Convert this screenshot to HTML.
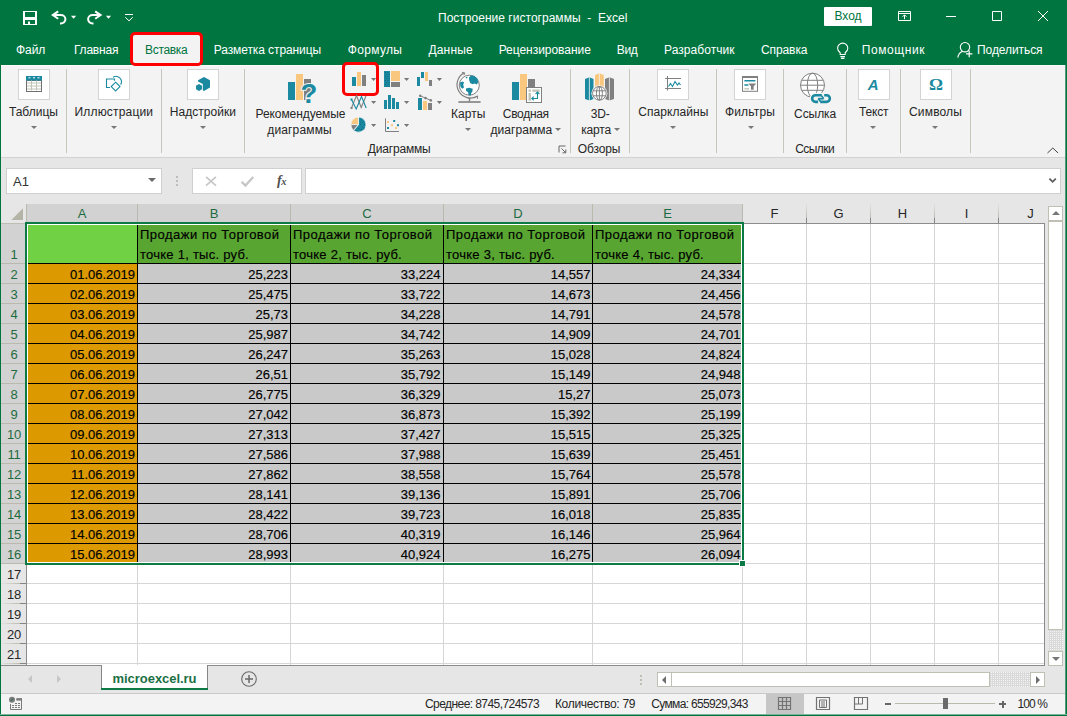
<!DOCTYPE html>
<html lang="ru"><head><meta charset="utf-8"><title>Построение гистограммы - Excel</title>
<style>
html,body{margin:0;padding:0}
body{width:1067px;height:716px;overflow:hidden;background:#e6e6e6;font-family:"Liberation Sans",sans-serif;font-size:12px;color:#262626;position:relative}
.a{position:absolute}
.t{position:absolute;white-space:nowrap;line-height:16px;height:16px}
.w{color:#fff}
.c{text-align:center}
.sep{position:absolute;top:69px;width:1px;height:84px;background:#c6c6bc}
.ib{position:absolute;top:69px;width:30px;height:29px;background:#fff;border:1px solid #d4d4d4}
.dd{position:absolute;width:0;height:0;border-left:3px solid transparent;border-right:3px solid transparent;border-top:3px solid #777}
.cell{position:absolute;white-space:nowrap;font-size:13px;line-height:16px;height:16px;color:#000;text-align:right;-webkit-text-stroke:0.15px #000}
.hd{position:absolute;top:205px;height:18px;line-height:18px;text-align:center;font-size:13px;color:#262626}
.rn{position:absolute;left:2px;width:24px;letter-spacing:-0.3px;text-align:center;font-size:13px;line-height:16px;height:16px;color:#262626}
.sel{color:#1e6b41}
</style></head>
<body>
<div class="a" style="left:0;top:0;width:1067px;height:65px;background:#007540"></div>
<svg class="a" style="left:0;top:0" width="200" height="32" viewBox="0 0 200 32" fill="none" stroke="#fff">
<path d="M24 11.500v13M36 11.500v13" stroke-width="2"/><path d="M23 11.500h14M23 24.500h14" stroke-width="1"/><path d="M25 18.500h10" stroke-width="3"/><path d="M29 21.500v3" stroke-width="2"/>
<path d="M58.200 11.400l-5.400 3.700 5.400 3.700" stroke-width="2"/><path d="M53.500 15.100h7.300a4.600 4.200 0 0 1 0 8.400h-.8" stroke-width="2"/>
<path d="M71 15.800h5.200l-2.600 3z" fill="#fff" stroke="none"/>
<path d="M95.200 11.400l5.400 3.700-5.400 3.700" stroke-width="2"/><path d="M100 15.100h-7.300a4.600 4.200 0 0 0 0 8.400h.8" stroke-width="2"/>
<path d="M105.900 15.800h5.200l-2.600 3z" fill="#fff" stroke="none"/>
<path d="M125 14.500h8" stroke-width="1"/><path d="M125.300 17.300l3.700 3.500 3.700-3.500" stroke-width="1"/>
</svg>
<div class="t w" style="left:438.0px;top:10px;letter-spacing:0.02px;white-space:pre;">Построение гистограммы  -  Excel</div>
<div class="a c" style="left:824px;top:7px;width:48px;height:19px;line-height:19px;background:#fff;color:#007540;border-radius:1px">Вход</div>
<svg class="a" style="left:890px;top:6px" width="170" height="20" viewBox="0 0 170 20" fill="none" stroke="#fff" stroke-width="1">
<path d="M8.500 5.500h12v9h-12z"/><path d="M8.500 7.500h12"/><path d="M14.500 13.200v-4.200M12.500 10.800l2-2 2 2"/>
<path d="M56 10.5h10"/>
<path d="M102.5 5.5h9v9h-9z"/>
<path d="M148 5l10 10M158 5l-10 10"/>
</svg>
<div class="t w" style="left:16.0px;top:42px;letter-spacing:-0.08px;">Файл</div>
<div class="t w" style="left:74.0px;top:42px;letter-spacing:-0.21px;">Главная</div>
<div class="t w" style="left:213.7px;top:42px;letter-spacing:-0.09px;">Разметка страницы</div>
<div class="t w" style="left:347.8px;top:42px;letter-spacing:0.31px;">Формулы</div>
<div class="t w" style="left:428.5px;top:42px;letter-spacing:0.16px;">Данные</div>
<div class="t w" style="left:498.7px;top:42px;letter-spacing:-0.04px;">Рецензирование</div>
<div class="t w" style="left:616.8px;top:42px;letter-spacing:-0.34px;">Вид</div>
<div class="t w" style="left:664.0px;top:42px;letter-spacing:0.05px;">Разработчик</div>
<div class="t w" style="left:760.9px;top:42px;letter-spacing:-0.07px;">Справка</div>
<div class="t w" style="left:861.7px;top:42px;letter-spacing:0.60px;">Помощник</div>
<div class="t w" style="left:977.0px;top:42px;letter-spacing:-0.08px;">Поделиться</div>
<div class="a" style="left:130px;top:32px;width:67px;height:28px;border:3px solid #f00;border-radius:5px;background:#f3f3f3;z-index:2"></div>
<div class="t" style="left:145.1px;top:42px;letter-spacing:-0.34px;color:#007540;z-index:3;">Вставка</div>
<svg class="a" style="left:834px;top:40px" width="18" height="20" viewBox="0 0 18 20" fill="none" stroke="#fff" stroke-width="1.1">
<path d="M6.2 12.8c-1.6-1.2-2.6-2.7-2.6-4.6a5.1 5.1 0 0 1 10.2 0c0 1.9-1 3.4-2.6 4.6v1.7h-5z"/><path d="M6.4 16.6h4.6M7 18.4h3.4"/></svg>
<svg class="a" style="left:956px;top:40px" width="18" height="20" viewBox="0 0 18 20" fill="none" stroke="#fff" stroke-width="1.1">
<circle cx="9" cy="7.200" r="4.700"/><path d="M1.800 17.600c.500-3.400 2.300-5.400 4.800-6.400"/><path d="M13.200 10.400v6.800M10 13.800h6.400" stroke-width="1.200"/></svg>
<div class="a" style="left:0;top:65px;width:1067px;height:92px;background:#f3f3f3"></div>
<div class="a" style="left:0;top:65px;width:1067px;height:1px;background:#fbfbfb"></div>
<div class="a" style="left:0;top:157px;width:1067px;height:1px;background:#d2d2d2"></div>
<div class="sep" style="left:66px"></div>
<div class="sep" style="left:161px"></div>
<div class="sep" style="left:244px"></div>
<div class="sep" style="left:570px"></div>
<div class="sep" style="left:629px"></div>
<div class="sep" style="left:716px"></div>
<div class="sep" style="left:783px"></div>
<div class="sep" style="left:846px"></div>
<div class="sep" style="left:900px"></div>
<div class="sep" style="left:970px"></div>
<div class="ib" style="left:18px"></div>
<div class="ib" style="left:98px"></div>
<div class="ib" style="left:187px"></div>
<div class="ib" style="left:657px"></div>
<div class="ib" style="left:734px"></div>
<div class="ib" style="left:858px"></div>
<div class="ib" style="left:920px"></div>
<div class="t" style="left:8.9px;top:104px;letter-spacing:-0.00px;">Таблицы</div>
<div class="dd" style="left:30.9px;top:126px"></div>
<div class="t" style="left:74.5px;top:104px;letter-spacing:0.18px;">Иллюстрации</div>
<div class="dd" style="left:111.3px;top:126px"></div>
<div class="t" style="left:169.8px;top:104px;letter-spacing:0.04px;">Надстройки</div>
<div class="dd" style="left:200.4px;top:126px"></div>
<div class="t" style="left:638.2px;top:104px;letter-spacing:0.07px;">Спарклайны</div>
<div class="dd" style="left:670.4px;top:126px"></div>
<div class="t" style="left:724.9px;top:104px;letter-spacing:0.18px;">Фильтры</div>
<div class="dd" style="left:747.5px;top:126px"></div>
<div class="t" style="left:859.1px;top:104px;letter-spacing:-0.20px;">Текст</div>
<div class="dd" style="left:870.2px;top:126px"></div>
<div class="t" style="left:909.0px;top:104px;letter-spacing:0.17px;">Символы</div>
<div class="dd" style="left:932.3px;top:126px"></div>
<div class="t" style="left:255.5px;top:106px;letter-spacing:-0.07px;">Рекомендуемые</div>
<div class="t" style="left:267.3px;top:122px;letter-spacing:0.14px;">диаграммы</div>
<div class="t" style="left:451.1px;top:106px;letter-spacing:0.04px;">Карты</div>
<div class="dd" style="left:464.5px;top:128px"></div>
<div class="t" style="left:502.8px;top:106px;letter-spacing:-0.30px;">Сводная</div>
<div class="t" style="left:490.5px;top:122px;letter-spacing:0.06px;">диаграмма</div>
<div class="dd" style="left:554.7px;top:128px"></div>
<div class="t" style="left:590.7px;top:106px;letter-spacing:-0.11px;">3D-</div>
<div class="t" style="left:581.3px;top:122px;letter-spacing:-0.21px;">карта</div>
<div class="dd" style="left:613.7px;top:128px"></div>
<div class="t" style="left:794.1px;top:106px;letter-spacing:-0.08px;">Ссылка</div>
<div class="t" style="left:367.7px;top:141px;letter-spacing:-0.17px;">Диаграммы</div>
<div class="t" style="left:577.8px;top:141px;letter-spacing:-0.13px;">Обзоры</div>
<div class="t" style="left:795.2px;top:141px;letter-spacing:-0.54px;">Ссылки</div>
<svg class="a" style="left:1045px;top:145px" width="16" height="10" viewBox="0 0 16 10" fill="none" stroke="#444" stroke-width="1"><path d="M2.5 8l5.3-5 5.3 5"/></svg>
<svg class="a" style="left:558px;top:145px" width="9" height="9" viewBox="0 0 9 9" fill="none" stroke="#666" stroke-width="1"><path d="M1 7.5v-6.5h6.5"/><path d="M3.5 3.5l4 4M7.8 4.5v3.3h-3.3"/></svg>
<div class="a" style="left:342px;top:62px;width:31px;height:28px;border:3px solid #f00;border-radius:5px"></div>
<svg class="a" style="left:0;top:0" width="1067" height="160" viewBox="0 0 1067 160" shape-rendering="auto">
<!-- tables icon -->
<g>
<rect x="26.5" y="80.5" width="15" height="11" fill="#fff" stroke="#707070"/>
<path d="M31.500 80v11M36.500 80v11M27 83.500h14M27 86.500h14M27 89.500h14" stroke="#c3c3b7" fill="none" transform="translate(0,-0.5)"/>
<rect x="26" y="76" width="16" height="4.500" fill="#1b8aa0"/>
<path d="M28.500 77.800h2M33 77.800h2M37.500 77.800h2" stroke="#fff" stroke-width="1" fill="none"/>
</g>
<!-- illustrations icon -->
<g fill="none" stroke="#1b8aa0" stroke-width="1.1">
<path d="M110 87.500h-3.500v-8.500h8v1.800"/>
<path d="M113 77.300a5.400 5.400 0 0 1 7.600 7.300"/>
<path d="M115.600 82.200l4.400 4.400-4.400 4.400-4.400-4.400z"/>
</g>
<!-- addins icon -->
<g fill="#1b8aa0">
<path d="M204 77l6 3.300v7.200l-6 3.500-1.200-.7v-6.200l-4.800-2.700v-1.100z"/>
<path d="M199 84.100l3 1.700v3.400l-3 1.700-3-1.700v-3.400z"/>
</g>
<!-- recommended charts -->
<rect x="288" y="82" width="7" height="18" fill="#1b8aa0"/>
<rect x="296" y="74" width="7" height="26" fill="#f9c77d"/>
<rect x="304" y="79" width="7" height="21" fill="#808080"/>
<text x="300.400" y="102.900" font-family="Liberation Sans, sans-serif" font-weight="bold" font-size="27.500" fill="#1b8aa0" stroke="#f3f3f3" stroke-width="2" paint-order="stroke">?</text>
<!-- column chart -->
<rect x="352" y="77" width="4" height="9" fill="#1b8aa0"/><rect x="357" y="72" width="4" height="14" fill="#f9c77d"/><rect x="362" y="75" width="4" height="11" fill="#808080"/>
<!-- treemap -->
<rect x="384" y="71" width="6" height="16" fill="#1b8aa0"/><rect x="391" y="71" width="9" height="10" fill="#f9c77d"/><rect x="391" y="82" width="9" height="5" fill="#808080"/>
<rect x="385.0" y="72" width="0.9" height="0.9" fill="#0a5f78"/><rect x="387.5" y="72" width="0.9" height="0.9" fill="#0a5f78"/><rect x="386.2" y="74" width="0.9" height="0.9" fill="#0a5f78"/><rect x="388.7" y="74" width="0.9" height="0.9" fill="#0a5f78"/><rect x="385.0" y="76" width="0.9" height="0.9" fill="#0a5f78"/><rect x="387.5" y="76" width="0.9" height="0.9" fill="#0a5f78"/><rect x="386.2" y="78" width="0.9" height="0.9" fill="#0a5f78"/><rect x="388.7" y="78" width="0.9" height="0.9" fill="#0a5f78"/><rect x="385.0" y="80" width="0.9" height="0.9" fill="#0a5f78"/><rect x="387.5" y="80" width="0.9" height="0.9" fill="#0a5f78"/><rect x="386.2" y="82" width="0.9" height="0.9" fill="#0a5f78"/><rect x="388.7" y="82" width="0.9" height="0.9" fill="#0a5f78"/><rect x="385.0" y="84" width="0.9" height="0.9" fill="#0a5f78"/><rect x="387.5" y="84" width="0.9" height="0.9" fill="#0a5f78"/><rect x="386.2" y="86" width="0.9" height="0.9" fill="#0a5f78"/><rect x="388.7" y="86" width="0.9" height="0.9" fill="#0a5f78"/>
<!-- waterfall -->
<rect x="417" y="77" width="3" height="9" fill="#1b8aa0"/><rect x="421" y="72" width="3" height="6" fill="#1b8aa0"/><rect x="425" y="72" width="3" height="9" fill="#f9c77d"/><rect x="429" y="80" width="3" height="6" fill="#808080"/>
<!-- line chart -->
<g fill="none" stroke-width="1.1">
<path d="M351.500 108l5-12.500 4.700 12 4.800-11.500" stroke="#808080"/>
<path d="M351.500 99.500l4.700 9.500 5.300-12.500 4.700 11.500" stroke="#1b8aa0"/>
</g>
<rect x="350.500" y="98.500" width="2" height="2" fill="#1b8aa0"/><rect x="350.500" y="107" width="2" height="2" fill="#808080"/>
<!-- histogram -->
<rect x="384" y="100" width="3" height="9" fill="#1b8aa0"/><rect x="388" y="95" width="3" height="14" fill="#1b8aa0"/><rect x="392" y="98" width="3" height="11" fill="#1b8aa0"/><rect x="396" y="102" width="3" height="7" fill="#1b8aa0"/>
<!-- combo -->
<rect x="418" y="98" width="4" height="12" fill="#1b8aa0"/><rect x="423" y="101" width="4" height="9" fill="#f9c77d"/><rect x="428" y="103" width="4" height="7" fill="#808080"/>
<path d="M420.200 95.800l5.300 2.300 5.300 2.300" stroke="#808080" stroke-width="1" fill="none"/>
<circle cx="420.200" cy="95.800" r="1.300" fill="#808080"/><circle cx="425.500" cy="98.100" r="1.300" fill="#808080"/><circle cx="430.800" cy="100.400" r="1.300" fill="#808080"/>
<!-- pie -->
<g stroke="#f3f3f3" stroke-width="0.9">
<path d="M358.400 124.600v-7.600a7.600 7.600 0 1 1-4.900 13.400z" fill="#1b8aa0"/>
<path d="M358.400 124.600h-7.600a7.600 7.600 0 0 1 7.600-7.600z" fill="#f9c77d"/>
<path d="M358.400 124.600l-4.900 5.800a7.600 7.600 0 0 1-2.700-5.800z" fill="#808080"/>
</g>
<rect x="360.5" y="119.5" width="0.9" height="0.9" fill="#0a5f78"/><rect x="362.5" y="121.5" width="0.9" height="0.9" fill="#0a5f78"/><rect x="364" y="124" width="0.9" height="0.9" fill="#0a5f78"/><rect x="362" y="126.5" width="0.9" height="0.9" fill="#0a5f78"/><rect x="360" y="124" width="0.9" height="0.9" fill="#0a5f78"/><rect x="361" y="129" width="0.9" height="0.9" fill="#0a5f78"/><rect x="358.5" y="128" width="0.9" height="0.9" fill="#0a5f78"/><rect x="363.5" y="128.5" width="0.9" height="0.9" fill="#0a5f78"/><rect x="356.5" y="130" width="0.9" height="0.9" fill="#0a5f78"/><rect x="360.5" y="122" width="0.9" height="0.9" fill="#0a5f78"/>
<!-- scatter -->
<path d="M385.500 118.300v13.200h13.500" stroke="#808080" stroke-width="1" fill="none"/>
<rect x="387" y="121" width="2" height="2" fill="#f9c77d"/><rect x="393.200" y="120" width="2" height="2" fill="#1b8aa0"/><rect x="391" y="124.200" width="2" height="2" fill="#f9c77d"/><rect x="397" y="124.200" width="2" height="2" fill="#1b8aa0"/><rect x="387" y="127" width="2" height="2" fill="#1b8aa0"/><rect x="395" y="127" width="2" height="2" fill="#f9c77d"/>
<!-- small dropdown arrows -->
<g fill="#777">
<path d="M371 78h5.200l-2.600 3z"/><path d="M404 78h5.200l-2.600 3z"/><path d="M436.800 78h5.200l-2.600 3z"/>
<path d="M371 101h5.200l-2.600 3z"/><path d="M404 101h5.200l-2.600 3z"/><path d="M436.800 101h5.200l-2.600 3z"/>
<path d="M371 124h5.200l-2.600 3z"/><path d="M404 124h5.200l-2.600 3z"/>
</g>
<!-- maps globe -->
<g fill="none" stroke="#808080">
<circle cx="469.300" cy="85.200" r="10" fill="#fff" stroke-width="1"/>
<path d="M463.800 73a12.600 12.600 0 0 0 13.300 23.300" stroke-width="1.200"/>
<path d="M462 72.300l2.800.6-.9 2.300M474.800 97.600l2.800-1.700-.2 2.900" stroke-width="1"/>
<path d="M469.500 97.500v4" stroke-width="1.400"/>
<path d="M458.400 102h22.200" stroke-width="1.600"/>
</g>
<g fill="#1b8aa0">
<path d="M469 77.500l2-2 3.500.5 3 2.800.8 3.200-1.500 2.500-2.300-1-2 .8-2.300-1.300-1-2.700z"/>
<path d="M460 82.500l2.500-1 1.500 1-.8 2.300.8 2.800-1.800 1.200-1.800-2.300z"/>
<path d="M466 88.500l3.200-.8 3.500 1-.3 3-1.200 1.300-.3 2.500-2.300-.3-.5-3-2.100-1.400z"/>
<path d="M465.500 77.500l1.500-.8.700 1-1.400.9z"/>
</g>
<!-- pivot chart -->
<rect x="512" y="82" width="7" height="18" fill="#1b8aa0"/><rect x="520" y="74" width="7" height="26" fill="#f9c77d"/><rect x="528" y="79" width="7" height="12" fill="#808080"/>
<rect x="526.500" y="87.500" width="15" height="15" fill="#fff" stroke="#808080"/>
<rect x="528.500" y="89.500" width="2.500" height="2.300" fill="#c3c3b7"/><rect x="532.300" y="89.500" width="7.400" height="2.300" fill="#c3c3b7"/><rect x="528.500" y="93" width="2.500" height="7.700" fill="#c3c3b7"/>
<path d="M537.500 92.200v6.300h-5.500M535.600 94l1.900-1.900 1.900 1.900M533.700 96.600l-1.900 1.900 1.900 1.900" stroke="#1b8aa0" stroke-width="1.100" fill="none"/>
<!-- 3d map -->
<path d="M585 79l4.500-1.700 4 1.700v20l-4 1.500-4.500-1.500z" fill="#1b8aa0"/><path d="M589.400 77v24" stroke="#f3f3f3" stroke-width="0.800"/>
<path d="M595 75l4.500-1.800 4.300 1.800v20h-8.800z" fill="#f9c77d"/><path d="M599.400 73v22" stroke="#f3f3f3" stroke-width="0.800"/>
<path d="M605 79l4.500-1.700 4.500 1.700v20l-4.500 1.500-4.500-1.500z" fill="#808080"/><path d="M609.400 77v24" stroke="#f3f3f3" stroke-width="0.800"/>
<circle cx="599.400" cy="93.300" r="8" fill="#f3f3f3"/>
<g fill="none" stroke="#808080" stroke-width="1">
<circle cx="599.400" cy="93.300" r="6.800" fill="#fff"/>
<ellipse cx="599.400" cy="93.300" rx="3" ry="6.800"/>
<path d="M599.400 86.500v13.600M593.200 90.800h12.400M593.200 95.800h12.400"/>
</g>
<!-- sparkline -->
<path d="M667.500 76v14.600M665 78.500h16M665 88.500h16" stroke="#808080" stroke-width="1" fill="none"/>
<path d="M668.500 86.500l2-3 2 3 2.500-5 2.500 3.500 1.500-2 1.500 2" stroke="#1b8aa0" stroke-width="1.100" fill="none"/>
<!-- filter -->
<rect x="742.500" y="77" width="15" height="14.300" fill="#fff" stroke="#808080"/><rect x="742" y="76" width="16" height="2" fill="#808080"/>
<path d="M744.400 80.700h11M744.400 85h4" stroke="#1b8aa0" stroke-width="1.600" fill="none"/>
<path d="M744.400 88.800h4.600" stroke="#c3c3b7" stroke-width="1.400"/>
<path d="M748.400 83.500h7.800l-2.600 3v3.300h-2.600v-3.300z" fill="#808080"/>
<!-- link -->
<g fill="none" stroke="#808080" stroke-width="1">
<circle cx="812.500" cy="85.200" r="12" fill="#fff"/>
<ellipse cx="812.500" cy="85.200" rx="5.200" ry="12"/>
<path d="M800.500 85.200h24M801.800 80.300h21.400M801.800 90.300h21.400"/>
</g>
<rect x="809.600" y="92.700" width="22.800" height="11.700" rx="5.800" fill="#f3f3f3"/>
<g fill="none" stroke="#1b8aa0" stroke-width="2.600">
<path d="M821.800 95.200h-6.300a3.350 3.350 0 0 0 0 6.700h2.600"/>
<path d="M824.200 95.200h2.300a3.350 3.350 0 0 1 0 6.700h-6.300"/>
<path d="M818.300 98.700h5.200" stroke-width="1.800"/>
<path d="M821.500 95.600l2.200 3M818.200 98.600l2.400 3.200" stroke-width="1.600"/>
</g>
<!-- text A / omega -->
<text x="867.800" y="89.800" font-family="Liberation Sans, sans-serif" font-style="italic" font-weight="bold" font-size="15" fill="#1b8aa0">A</text>
<text x="929" y="89.800" font-family="Liberation Serif, serif" font-weight="bold" font-size="17.500" fill="#1b8aa0">Ω</text>
</svg>

<div class="a" style="left:6px;top:168px;width:154px;height:24px;background:#fff;border:1px solid #d0d0d0"></div>
<div class="t" style="left:13px;top:174px;font-size:13px;color:#333">A1</div>
<div class="a" style="left:147.600px;top:177.700px;width:0;height:0;border-left:4px solid transparent;border-right:4px solid transparent;border-top:4.500px solid #6a6a6a"></div>
<div class="a" style="left:176px;top:176px;width:2px;height:2px;background:#bdbdbd"></div>
<div class="a" style="left:176px;top:180px;width:2px;height:2px;background:#bdbdbd"></div>
<div class="a" style="left:176px;top:184px;width:2px;height:2px;background:#bdbdbd"></div>
<div class="a" style="left:192px;top:168px;width:108px;height:24px;background:#fff;border:1px solid #d0d0d0"></div>
<svg class="a" style="left:200px;top:172px" width="96" height="18" viewBox="0 0 96 18" fill="none" stroke="#c6c6c6">
<path d="M6 4.800l10 8.800M16 4.800l-10 8.800" stroke-width="1.700"/><path d="M41.600 9.800l3.800 3.800 7.800-8.600" stroke-width="2.300"/></svg>
<div class="t" style="left:277px;top:173px;font-family:'Liberation Serif',serif;font-style:italic;font-weight:bold;font-size:14px;color:#505050;letter-spacing:-0.5px">f<span style="font-size:10.500px">x</span></div>
<div class="a" style="left:305px;top:168px;width:754px;height:24px;background:#fff;border:1px solid #d0d0d0"></div>
<svg class="a" style="left:1046px;top:176px" width="12" height="10" viewBox="0 0 12 10" fill="none" stroke="#5e5e5e" stroke-width="1.8"><path d="M3.400 2.600l3.200 3.200 3.200-3.200"/></svg>
<div class="a" style="left:1px;top:204px;width:1044px;height:462px;background:#fff"></div>
<div class="a" style="left:1px;top:204px;width:1044px;height:19px;background:#e6e6e6"></div>
<div class="a" style="left:1px;top:223px;width:25px;height:442px;background:#e6e6e6"></div>
<div class="a" style="left:27px;top:204px;width:715px;height:18px;background:#d2d2d2"></div>
<div class="a" style="left:1px;top:224px;width:24px;height:339px;background:#d2d2d2"></div>
<svg class="a" style="left:11px;top:208px" width="13" height="13" viewBox="0 0 13 13"><path d="M0.3 12L12 0.3V12z" fill="#b5b5a7"/></svg>
<div class="a" style="left:1px;top:223px;width:25px;height:1px;background:#bdbdb1"></div>
<div class="a" style="left:26px;top:204px;width:1px;height:19px;background:#b9b9ad"></div>
<div class="hd sel" style="left:27px;width:110px">A</div>
<div class="a" style="left:137px;top:204px;width:1px;height:19px;background:#b9b9ad"></div>
<div class="hd sel" style="left:138px;width:152px">B</div>
<div class="a" style="left:290px;top:204px;width:1px;height:19px;background:#b9b9ad"></div>
<div class="hd sel" style="left:291px;width:152px">C</div>
<div class="a" style="left:443px;top:204px;width:1px;height:19px;background:#b9b9ad"></div>
<div class="hd sel" style="left:444px;width:148px">D</div>
<div class="a" style="left:592px;top:204px;width:1px;height:19px;background:#b9b9ad"></div>
<div class="hd sel" style="left:593px;width:149px">E</div>
<div class="a" style="left:742px;top:204px;width:1px;height:19px;background:#b9b9ad"></div>
<div class="hd" style="left:743px;width:63px">F</div>
<div class="a" style="left:806px;top:204px;width:1px;height:19px;background:linear-gradient(#e2e2e2 0,#d0d0c8 35%,#bcbcb0 72%,#858585 74%,#858585 100%)"></div>
<div class="hd" style="left:807px;width:63px">G</div>
<div class="a" style="left:870px;top:204px;width:1px;height:19px;background:linear-gradient(#e2e2e2 0,#d0d0c8 35%,#bcbcb0 72%,#858585 74%,#858585 100%)"></div>
<div class="hd" style="left:871px;width:63px">H</div>
<div class="a" style="left:934px;top:204px;width:1px;height:19px;background:linear-gradient(#e2e2e2 0,#d0d0c8 35%,#bcbcb0 72%,#858585 74%,#858585 100%)"></div>
<div class="hd" style="left:935px;width:63px">I</div>
<div class="a" style="left:998px;top:204px;width:1px;height:19px;background:linear-gradient(#e2e2e2 0,#d0d0c8 35%,#bcbcb0 72%,#858585 74%,#858585 100%)"></div>
<div class="hd" style="left:999px;width:63px">J</div>
<div class="a" style="left:137px;top:224px;width:1px;height:441px;background:#d6d6d6"></div>
<div class="a" style="left:290px;top:224px;width:1px;height:441px;background:#d6d6d6"></div>
<div class="a" style="left:443px;top:224px;width:1px;height:441px;background:#d6d6d6"></div>
<div class="a" style="left:592px;top:224px;width:1px;height:441px;background:#d6d6d6"></div>
<div class="a" style="left:742px;top:224px;width:1px;height:441px;background:#d6d6d6"></div>
<div class="a" style="left:806px;top:224px;width:1px;height:441px;background:#d6d6d6"></div>
<div class="a" style="left:870px;top:224px;width:1px;height:441px;background:#d6d6d6"></div>
<div class="a" style="left:934px;top:224px;width:1px;height:441px;background:#d6d6d6"></div>
<div class="a" style="left:998px;top:224px;width:1px;height:441px;background:#d6d6d6"></div>
<div class="a" style="left:27px;top:263px;width:1017px;height:1px;background:#d6d6d6"></div>
<div class="a" style="left:27px;top:283px;width:1017px;height:1px;background:#d6d6d6"></div>
<div class="a" style="left:27px;top:303px;width:1017px;height:1px;background:#d6d6d6"></div>
<div class="a" style="left:27px;top:323px;width:1017px;height:1px;background:#d6d6d6"></div>
<div class="a" style="left:27px;top:343px;width:1017px;height:1px;background:#d6d6d6"></div>
<div class="a" style="left:27px;top:363px;width:1017px;height:1px;background:#d6d6d6"></div>
<div class="a" style="left:27px;top:383px;width:1017px;height:1px;background:#d6d6d6"></div>
<div class="a" style="left:27px;top:403px;width:1017px;height:1px;background:#d6d6d6"></div>
<div class="a" style="left:27px;top:423px;width:1017px;height:1px;background:#d6d6d6"></div>
<div class="a" style="left:27px;top:443px;width:1017px;height:1px;background:#d6d6d6"></div>
<div class="a" style="left:27px;top:463px;width:1017px;height:1px;background:#d6d6d6"></div>
<div class="a" style="left:27px;top:483px;width:1017px;height:1px;background:#d6d6d6"></div>
<div class="a" style="left:27px;top:503px;width:1017px;height:1px;background:#d6d6d6"></div>
<div class="a" style="left:27px;top:523px;width:1017px;height:1px;background:#d6d6d6"></div>
<div class="a" style="left:27px;top:543px;width:1017px;height:1px;background:#d6d6d6"></div>
<div class="a" style="left:27px;top:563px;width:1017px;height:1px;background:#d6d6d6"></div>
<div class="a" style="left:27px;top:583px;width:1017px;height:1px;background:#d6d6d6"></div>
<div class="a" style="left:27px;top:603px;width:1017px;height:1px;background:#d6d6d6"></div>
<div class="a" style="left:27px;top:623px;width:1017px;height:1px;background:#d6d6d6"></div>
<div class="a" style="left:27px;top:643px;width:1017px;height:1px;background:#d6d6d6"></div>
<div class="a" style="left:27px;top:663px;width:1017px;height:1px;background:#d6d6d6"></div>
<div class="a" style="left:1px;top:663px;width:25px;height:1px;background:#c3c3c3"></div>
<div class="a" style="left:1px;top:263px;width:25px;height:1px;background:#b9b9ad"></div>
<div class="rn sel" style="top:247px">1</div>
<div class="a" style="left:1px;top:283px;width:25px;height:1px;background:#b9b9ad"></div>
<div class="rn sel" style="top:267px">2</div>
<div class="a" style="left:1px;top:303px;width:25px;height:1px;background:#b9b9ad"></div>
<div class="rn sel" style="top:287px">3</div>
<div class="a" style="left:1px;top:323px;width:25px;height:1px;background:#b9b9ad"></div>
<div class="rn sel" style="top:307px">4</div>
<div class="a" style="left:1px;top:343px;width:25px;height:1px;background:#b9b9ad"></div>
<div class="rn sel" style="top:327px">5</div>
<div class="a" style="left:1px;top:363px;width:25px;height:1px;background:#b9b9ad"></div>
<div class="rn sel" style="top:347px">6</div>
<div class="a" style="left:1px;top:383px;width:25px;height:1px;background:#b9b9ad"></div>
<div class="rn sel" style="top:367px">7</div>
<div class="a" style="left:1px;top:403px;width:25px;height:1px;background:#b9b9ad"></div>
<div class="rn sel" style="top:387px">8</div>
<div class="a" style="left:1px;top:423px;width:25px;height:1px;background:#b9b9ad"></div>
<div class="rn sel" style="top:407px">9</div>
<div class="a" style="left:1px;top:443px;width:25px;height:1px;background:#b9b9ad"></div>
<div class="rn sel" style="top:427px">10</div>
<div class="a" style="left:1px;top:463px;width:25px;height:1px;background:#b9b9ad"></div>
<div class="rn sel" style="top:447px">11</div>
<div class="a" style="left:1px;top:483px;width:25px;height:1px;background:#b9b9ad"></div>
<div class="rn sel" style="top:467px">12</div>
<div class="a" style="left:1px;top:503px;width:25px;height:1px;background:#b9b9ad"></div>
<div class="rn sel" style="top:487px">13</div>
<div class="a" style="left:1px;top:523px;width:25px;height:1px;background:#b9b9ad"></div>
<div class="rn sel" style="top:507px">14</div>
<div class="a" style="left:1px;top:543px;width:25px;height:1px;background:#b9b9ad"></div>
<div class="rn sel" style="top:527px">15</div>
<div class="a" style="left:1px;top:563px;width:25px;height:1px;background:#b9b9ad"></div>
<div class="rn sel" style="top:547px">16</div>
<div class="a" style="left:1px;top:583px;width:25px;height:1px;background:linear-gradient(90deg,#e2e2e2 0,#d0d0c8 35%,#bcbcb0 74%,#858585 76%,#858585 100%)"></div>
<div class="rn" style="top:567px">17</div>
<div class="a" style="left:1px;top:603px;width:25px;height:1px;background:linear-gradient(90deg,#e2e2e2 0,#d0d0c8 35%,#bcbcb0 74%,#858585 76%,#858585 100%)"></div>
<div class="rn" style="top:587px">18</div>
<div class="a" style="left:1px;top:623px;width:25px;height:1px;background:linear-gradient(90deg,#e2e2e2 0,#d0d0c8 35%,#bcbcb0 74%,#858585 76%,#858585 100%)"></div>
<div class="rn" style="top:607px">19</div>
<div class="a" style="left:1px;top:643px;width:25px;height:1px;background:linear-gradient(90deg,#e2e2e2 0,#d0d0c8 35%,#bcbcb0 74%,#858585 76%,#858585 100%)"></div>
<div class="rn" style="top:627px">20</div>
<div class="a" style="left:1px;top:663px;width:25px;height:1px;background:linear-gradient(90deg,#e2e2e2 0,#d0d0c8 35%,#bcbcb0 74%,#858585 76%,#858585 100%)"></div>
<div class="rn" style="top:647px">21</div>
<div class="a" style="left:26px;top:565px;width:1px;height:101px;background:#8c8c8c"></div>
<div class="a" style="left:1044px;top:223px;width:1px;height:443px;background:#8c8c8c"></div>
<div class="a" style="left:1px;top:665px;width:1044px;height:1px;background:#8a8a8a"></div>
<div class="a" style="left:744px;top:223px;width:301px;height:1px;background:#8c8c8c"></div>
<div class="a" style="left:28px;top:225px;width:713px;height:337px;background:#000"></div>
<div class="a" style="left:28px;top:225px;width:109px;height:38px;background:#6fd143"></div>
<div class="a" style="left:138px;top:225px;width:152px;height:38px;background:#58a532"></div>
<div class="cell" style="left:140px;top:227px;text-align:left;letter-spacing:0.5px">Продажи по Торговой</div>
<div class="cell" style="left:140px;top:247px;text-align:left;letter-spacing:0.25px">точке 1, тыс. руб.</div>
<div class="a" style="left:291px;top:225px;width:152px;height:38px;background:#58a532"></div>
<div class="cell" style="left:293px;top:227px;text-align:left;letter-spacing:0.5px">Продажи по Торговой</div>
<div class="cell" style="left:293px;top:247px;text-align:left;letter-spacing:0.25px">точке 2, тыс. руб.</div>
<div class="a" style="left:444px;top:225px;width:148px;height:38px;background:#58a532"></div>
<div class="cell" style="left:446px;top:227px;text-align:left;letter-spacing:0.5px">Продажи по Торговой</div>
<div class="cell" style="left:446px;top:247px;text-align:left;letter-spacing:0.25px">точке 3, тыс. руб.</div>
<div class="a" style="left:593px;top:225px;width:148px;height:38px;background:#58a532"></div>
<div class="cell" style="left:595px;top:227px;text-align:left;letter-spacing:0.5px">Продажи по Торговой</div>
<div class="cell" style="left:595px;top:247px;text-align:left;letter-spacing:0.25px">точке 4, тыс. руб.</div>
<div class="a" style="left:28px;top:264px;width:109px;height:19px;background:#dc9a00"></div>
<div class="cell" style="left:28px;width:107px;top:267px">01.06.2019</div>
<div class="a" style="left:138px;top:264px;width:152px;height:19px;background:#c9c9c9"></div>
<div class="cell" style="left:138px;width:150px;top:267px">25,223</div>
<div class="a" style="left:291px;top:264px;width:152px;height:19px;background:#c9c9c9"></div>
<div class="cell" style="left:291px;width:149.5px;top:267px">33,224</div>
<div class="a" style="left:444px;top:264px;width:148px;height:19px;background:#c9c9c9"></div>
<div class="cell" style="left:444px;width:146.5px;top:267px">14,557</div>
<div class="a" style="left:593px;top:264px;width:148px;height:19px;background:#c9c9c9"></div>
<div class="cell" style="left:593px;width:147.5px;top:267px">24,334</div>
<div class="a" style="left:28px;top:284px;width:109px;height:19px;background:#dc9a00"></div>
<div class="cell" style="left:28px;width:107px;top:287px">02.06.2019</div>
<div class="a" style="left:138px;top:284px;width:152px;height:19px;background:#c9c9c9"></div>
<div class="cell" style="left:138px;width:150px;top:287px">25,475</div>
<div class="a" style="left:291px;top:284px;width:152px;height:19px;background:#c9c9c9"></div>
<div class="cell" style="left:291px;width:149.5px;top:287px">33,722</div>
<div class="a" style="left:444px;top:284px;width:148px;height:19px;background:#c9c9c9"></div>
<div class="cell" style="left:444px;width:146.5px;top:287px">14,673</div>
<div class="a" style="left:593px;top:284px;width:148px;height:19px;background:#c9c9c9"></div>
<div class="cell" style="left:593px;width:147.5px;top:287px">24,456</div>
<div class="a" style="left:28px;top:304px;width:109px;height:19px;background:#dc9a00"></div>
<div class="cell" style="left:28px;width:107px;top:307px">03.06.2019</div>
<div class="a" style="left:138px;top:304px;width:152px;height:19px;background:#c9c9c9"></div>
<div class="cell" style="left:138px;width:150px;top:307px">25,73</div>
<div class="a" style="left:291px;top:304px;width:152px;height:19px;background:#c9c9c9"></div>
<div class="cell" style="left:291px;width:149.5px;top:307px">34,228</div>
<div class="a" style="left:444px;top:304px;width:148px;height:19px;background:#c9c9c9"></div>
<div class="cell" style="left:444px;width:146.5px;top:307px">14,791</div>
<div class="a" style="left:593px;top:304px;width:148px;height:19px;background:#c9c9c9"></div>
<div class="cell" style="left:593px;width:147.5px;top:307px">24,578</div>
<div class="a" style="left:28px;top:324px;width:109px;height:19px;background:#dc9a00"></div>
<div class="cell" style="left:28px;width:107px;top:327px">04.06.2019</div>
<div class="a" style="left:138px;top:324px;width:152px;height:19px;background:#c9c9c9"></div>
<div class="cell" style="left:138px;width:150px;top:327px">25,987</div>
<div class="a" style="left:291px;top:324px;width:152px;height:19px;background:#c9c9c9"></div>
<div class="cell" style="left:291px;width:149.5px;top:327px">34,742</div>
<div class="a" style="left:444px;top:324px;width:148px;height:19px;background:#c9c9c9"></div>
<div class="cell" style="left:444px;width:146.5px;top:327px">14,909</div>
<div class="a" style="left:593px;top:324px;width:148px;height:19px;background:#c9c9c9"></div>
<div class="cell" style="left:593px;width:147.5px;top:327px">24,701</div>
<div class="a" style="left:28px;top:344px;width:109px;height:19px;background:#dc9a00"></div>
<div class="cell" style="left:28px;width:107px;top:347px">05.06.2019</div>
<div class="a" style="left:138px;top:344px;width:152px;height:19px;background:#c9c9c9"></div>
<div class="cell" style="left:138px;width:150px;top:347px">26,247</div>
<div class="a" style="left:291px;top:344px;width:152px;height:19px;background:#c9c9c9"></div>
<div class="cell" style="left:291px;width:149.5px;top:347px">35,263</div>
<div class="a" style="left:444px;top:344px;width:148px;height:19px;background:#c9c9c9"></div>
<div class="cell" style="left:444px;width:146.5px;top:347px">15,028</div>
<div class="a" style="left:593px;top:344px;width:148px;height:19px;background:#c9c9c9"></div>
<div class="cell" style="left:593px;width:147.5px;top:347px">24,824</div>
<div class="a" style="left:28px;top:364px;width:109px;height:19px;background:#dc9a00"></div>
<div class="cell" style="left:28px;width:107px;top:367px">06.06.2019</div>
<div class="a" style="left:138px;top:364px;width:152px;height:19px;background:#c9c9c9"></div>
<div class="cell" style="left:138px;width:150px;top:367px">26,51</div>
<div class="a" style="left:291px;top:364px;width:152px;height:19px;background:#c9c9c9"></div>
<div class="cell" style="left:291px;width:149.5px;top:367px">35,792</div>
<div class="a" style="left:444px;top:364px;width:148px;height:19px;background:#c9c9c9"></div>
<div class="cell" style="left:444px;width:146.5px;top:367px">15,149</div>
<div class="a" style="left:593px;top:364px;width:148px;height:19px;background:#c9c9c9"></div>
<div class="cell" style="left:593px;width:147.5px;top:367px">24,948</div>
<div class="a" style="left:28px;top:384px;width:109px;height:19px;background:#dc9a00"></div>
<div class="cell" style="left:28px;width:107px;top:387px">07.06.2019</div>
<div class="a" style="left:138px;top:384px;width:152px;height:19px;background:#c9c9c9"></div>
<div class="cell" style="left:138px;width:150px;top:387px">26,775</div>
<div class="a" style="left:291px;top:384px;width:152px;height:19px;background:#c9c9c9"></div>
<div class="cell" style="left:291px;width:149.5px;top:387px">36,329</div>
<div class="a" style="left:444px;top:384px;width:148px;height:19px;background:#c9c9c9"></div>
<div class="cell" style="left:444px;width:146.5px;top:387px">15,27</div>
<div class="a" style="left:593px;top:384px;width:148px;height:19px;background:#c9c9c9"></div>
<div class="cell" style="left:593px;width:147.5px;top:387px">25,073</div>
<div class="a" style="left:28px;top:404px;width:109px;height:19px;background:#dc9a00"></div>
<div class="cell" style="left:28px;width:107px;top:407px">08.06.2019</div>
<div class="a" style="left:138px;top:404px;width:152px;height:19px;background:#c9c9c9"></div>
<div class="cell" style="left:138px;width:150px;top:407px">27,042</div>
<div class="a" style="left:291px;top:404px;width:152px;height:19px;background:#c9c9c9"></div>
<div class="cell" style="left:291px;width:149.5px;top:407px">36,873</div>
<div class="a" style="left:444px;top:404px;width:148px;height:19px;background:#c9c9c9"></div>
<div class="cell" style="left:444px;width:146.5px;top:407px">15,392</div>
<div class="a" style="left:593px;top:404px;width:148px;height:19px;background:#c9c9c9"></div>
<div class="cell" style="left:593px;width:147.5px;top:407px">25,199</div>
<div class="a" style="left:28px;top:424px;width:109px;height:19px;background:#dc9a00"></div>
<div class="cell" style="left:28px;width:107px;top:427px">09.06.2019</div>
<div class="a" style="left:138px;top:424px;width:152px;height:19px;background:#c9c9c9"></div>
<div class="cell" style="left:138px;width:150px;top:427px">27,313</div>
<div class="a" style="left:291px;top:424px;width:152px;height:19px;background:#c9c9c9"></div>
<div class="cell" style="left:291px;width:149.5px;top:427px">37,427</div>
<div class="a" style="left:444px;top:424px;width:148px;height:19px;background:#c9c9c9"></div>
<div class="cell" style="left:444px;width:146.5px;top:427px">15,515</div>
<div class="a" style="left:593px;top:424px;width:148px;height:19px;background:#c9c9c9"></div>
<div class="cell" style="left:593px;width:147.5px;top:427px">25,325</div>
<div class="a" style="left:28px;top:444px;width:109px;height:19px;background:#dc9a00"></div>
<div class="cell" style="left:28px;width:107px;top:447px">10.06.2019</div>
<div class="a" style="left:138px;top:444px;width:152px;height:19px;background:#c9c9c9"></div>
<div class="cell" style="left:138px;width:150px;top:447px">27,586</div>
<div class="a" style="left:291px;top:444px;width:152px;height:19px;background:#c9c9c9"></div>
<div class="cell" style="left:291px;width:149.5px;top:447px">37,988</div>
<div class="a" style="left:444px;top:444px;width:148px;height:19px;background:#c9c9c9"></div>
<div class="cell" style="left:444px;width:146.5px;top:447px">15,639</div>
<div class="a" style="left:593px;top:444px;width:148px;height:19px;background:#c9c9c9"></div>
<div class="cell" style="left:593px;width:147.5px;top:447px">25,451</div>
<div class="a" style="left:28px;top:464px;width:109px;height:19px;background:#dc9a00"></div>
<div class="cell" style="left:28px;width:107px;top:467px">11.06.2019</div>
<div class="a" style="left:138px;top:464px;width:152px;height:19px;background:#c9c9c9"></div>
<div class="cell" style="left:138px;width:150px;top:467px">27,862</div>
<div class="a" style="left:291px;top:464px;width:152px;height:19px;background:#c9c9c9"></div>
<div class="cell" style="left:291px;width:149.5px;top:467px">38,558</div>
<div class="a" style="left:444px;top:464px;width:148px;height:19px;background:#c9c9c9"></div>
<div class="cell" style="left:444px;width:146.5px;top:467px">15,764</div>
<div class="a" style="left:593px;top:464px;width:148px;height:19px;background:#c9c9c9"></div>
<div class="cell" style="left:593px;width:147.5px;top:467px">25,578</div>
<div class="a" style="left:28px;top:484px;width:109px;height:19px;background:#dc9a00"></div>
<div class="cell" style="left:28px;width:107px;top:487px">12.06.2019</div>
<div class="a" style="left:138px;top:484px;width:152px;height:19px;background:#c9c9c9"></div>
<div class="cell" style="left:138px;width:150px;top:487px">28,141</div>
<div class="a" style="left:291px;top:484px;width:152px;height:19px;background:#c9c9c9"></div>
<div class="cell" style="left:291px;width:149.5px;top:487px">39,136</div>
<div class="a" style="left:444px;top:484px;width:148px;height:19px;background:#c9c9c9"></div>
<div class="cell" style="left:444px;width:146.5px;top:487px">15,891</div>
<div class="a" style="left:593px;top:484px;width:148px;height:19px;background:#c9c9c9"></div>
<div class="cell" style="left:593px;width:147.5px;top:487px">25,706</div>
<div class="a" style="left:28px;top:504px;width:109px;height:19px;background:#dc9a00"></div>
<div class="cell" style="left:28px;width:107px;top:507px">13.06.2019</div>
<div class="a" style="left:138px;top:504px;width:152px;height:19px;background:#c9c9c9"></div>
<div class="cell" style="left:138px;width:150px;top:507px">28,422</div>
<div class="a" style="left:291px;top:504px;width:152px;height:19px;background:#c9c9c9"></div>
<div class="cell" style="left:291px;width:149.5px;top:507px">39,723</div>
<div class="a" style="left:444px;top:504px;width:148px;height:19px;background:#c9c9c9"></div>
<div class="cell" style="left:444px;width:146.5px;top:507px">16,018</div>
<div class="a" style="left:593px;top:504px;width:148px;height:19px;background:#c9c9c9"></div>
<div class="cell" style="left:593px;width:147.5px;top:507px">25,835</div>
<div class="a" style="left:28px;top:524px;width:109px;height:19px;background:#dc9a00"></div>
<div class="cell" style="left:28px;width:107px;top:527px">14.06.2019</div>
<div class="a" style="left:138px;top:524px;width:152px;height:19px;background:#c9c9c9"></div>
<div class="cell" style="left:138px;width:150px;top:527px">28,706</div>
<div class="a" style="left:291px;top:524px;width:152px;height:19px;background:#c9c9c9"></div>
<div class="cell" style="left:291px;width:149.5px;top:527px">40,319</div>
<div class="a" style="left:444px;top:524px;width:148px;height:19px;background:#c9c9c9"></div>
<div class="cell" style="left:444px;width:146.5px;top:527px">16,146</div>
<div class="a" style="left:593px;top:524px;width:148px;height:19px;background:#c9c9c9"></div>
<div class="cell" style="left:593px;width:147.5px;top:527px">25,964</div>
<div class="a" style="left:28px;top:544px;width:109px;height:18px;background:#dc9a00"></div>
<div class="cell" style="left:28px;width:107px;top:547px">15.06.2019</div>
<div class="a" style="left:138px;top:544px;width:152px;height:18px;background:#c9c9c9"></div>
<div class="cell" style="left:138px;width:150px;top:547px">28,993</div>
<div class="a" style="left:291px;top:544px;width:152px;height:18px;background:#c9c9c9"></div>
<div class="cell" style="left:291px;width:149.5px;top:547px">40,924</div>
<div class="a" style="left:444px;top:544px;width:148px;height:18px;background:#c9c9c9"></div>
<div class="cell" style="left:444px;width:146.5px;top:547px">16,275</div>
<div class="a" style="left:593px;top:544px;width:148px;height:18px;background:#c9c9c9"></div>
<div class="cell" style="left:593px;width:147.5px;top:547px">26,094</div>
<div class="a" style="left:25px;top:222px;width:719px;height:2px;background:#0b7a45"></div>
<div class="a" style="left:25px;top:222px;width:2px;height:343px;background:#0b7a45"></div>
<div class="a" style="left:742px;top:222px;width:2px;height:338px;background:#0b7a45"></div>
<div class="a" style="left:25px;top:563px;width:714px;height:2px;background:#0b7a45"></div>
<div class="a" style="left:27px;top:224px;width:715px;height:1px;background:#fff"></div>
<div class="a" style="left:27px;top:224px;width:1px;height:339px;background:#fff"></div>
<div class="a" style="left:741px;top:224px;width:1px;height:339px;background:#fff"></div>
<div class="a" style="left:27px;top:562px;width:715px;height:1px;background:#fff"></div>
<div class="a" style="left:739px;top:560px;width:7px;height:7px;background:#fff"></div>
<div class="a" style="left:740px;top:561px;width:5px;height:5px;background:#0b7a45"></div>
<div class="a" style="left:1048px;top:206px;width:15px;height:460px;background:repeating-linear-gradient(0deg,transparent 0 1px,#d9d9d9 1px 2px),repeating-linear-gradient(90deg,#f4f4f4 0 1px,#d9d9d9 1px 2px)"></div>
<div class="a" style="left:1048px;top:206px;width:13px;height:13px;background:#fff;border:1px solid #bfbfb3"></div>
<div class="a" style="left:1048px;top:221px;width:13px;height:407px;background:#fff;border:1px solid #bfbfb3"></div>
<div class="a" style="left:1048px;top:651px;width:13px;height:13px;background:#fff;border:1px solid #bfbfb3"></div>
<div class="a" style="left:1051.500px;top:211px;width:0;height:0;border-left:4px solid transparent;border-right:4px solid transparent;border-bottom:4.500px solid #777"></div>
<div class="a" style="left:1051.500px;top:657px;width:0;height:0;border-left:4px solid transparent;border-right:4px solid transparent;border-top:4.500px solid #777"></div>
<div class="a" style="left:1px;top:666px;width:1064px;height:27px;background:#e6e6e6"></div>
<div class="a" style="left:102px;top:665px;width:105px;height:23px;background:#fff"></div>
<div class="a" style="left:101px;top:688px;width:107px;height:2px;background:#0b7a45"></div>
<div class="a" style="left:101px;top:665px;width:1px;height:23px;background:#858585"></div>
<div class="a" style="left:207px;top:665px;width:1px;height:23px;background:#858585"></div>
<div class="t c" style="left:101px;width:107px;top:671px;font-size:13px;font-weight:bold;color:#1b7044;letter-spacing:-0.05px">microexcel.ru</div>
<div class="a" style="left:28px;top:675px;width:0;height:0;border-top:4px solid transparent;border-bottom:4px solid transparent;border-right:4px solid #c6c6c6"></div>
<div class="a" style="left:57px;top:675px;width:0;height:0;border-top:4px solid transparent;border-bottom:4px solid transparent;border-left:4px solid #c6c6c6"></div>
<svg class="a" style="left:240px;top:670px" width="18" height="18" viewBox="0 0 18 18" fill="none" stroke="#6a6a6a" stroke-width="1.1"><circle cx="9" cy="9" r="7.3"/><path d="M9 5v8M5 9h8" stroke-width="1.5"/></svg>
<div class="a" style="left:640px;top:675px;width:2px;height:2px;background:#bdbdb1"></div>
<div class="a" style="left:640px;top:679px;width:2px;height:2px;background:#bdbdb1"></div>
<div class="a" style="left:640px;top:683px;width:2px;height:2px;background:#bdbdb1"></div>
<div class="a" style="left:657px;top:672px;width:388px;height:15px;background:repeating-linear-gradient(0deg,transparent 0 1px,#d9d9d9 1px 2px),repeating-linear-gradient(90deg,#f4f4f4 0 1px,#d9d9d9 1px 2px)"></div>
<div class="a" style="left:657px;top:672px;width:13px;height:13px;background:#fff;border:1px solid #bfbfb3"></div>
<div class="a" style="left:671px;top:672px;width:317px;height:13px;background:#fff;border:1px solid #bfbfb3"></div>
<div class="a" style="left:1030px;top:672px;width:13px;height:13px;background:#fff;border:1px solid #bfbfb3"></div>
<div class="a" style="left:661.500px;top:675.500px;width:0;height:0;border-top:4px solid transparent;border-bottom:4px solid transparent;border-right:4.500px solid #6e6e6e"></div>
<div class="a" style="left:1036px;top:675.500px;width:0;height:0;border-top:4px solid transparent;border-bottom:4px solid transparent;border-left:4.500px solid #6e6e6e"></div>
<div class="a" style="left:1px;top:693px;width:1064px;height:21px;background:#f3f3f3"></div>
<div class="a" style="left:1px;top:693px;width:1064px;height:1px;background:#cacaca"></div>
<svg class="a" style="left:0;top:690px" width="30" height="24" viewBox="0 690 30 24" fill="none" stroke="#7a7a7a" stroke-width="1">
<path d="M10.500 704v5.500h11v-10"/><rect x="16.300" y="698.100" width="5.700" height="2.500" fill="#7a7a7a" stroke="none"/>
<path d="M15 703.500h2M18 703.500h2M12 705.500h2M15 705.500h2M18 705.500h2M12 707.500h2M15 707.500h2M18 707.500h2"/>
<circle cx="12" cy="699.800" r="3" fill="#7a7a7a" stroke="none"/><path d="M11 700.800l2-2" stroke="#0d6b3f" stroke-width="1"/>
</svg>
<div class="t" style="left:425.0px;top:696px;letter-spacing:-0.57px;">Среднее: 8745,724573</div>
<div class="t" style="left:554.9px;top:696px;letter-spacing:-0.30px;">Количество: 79</div>
<div class="t" style="left:651.3px;top:696px;letter-spacing:-0.67px;">Сумма: 655929,343</div>
<div class="a" style="left:766px;top:694px;width:38px;height:20px;background:#c6c6c6"></div>
<svg class="a" style="left:776px;top:695px" width="100" height="18" viewBox="0 0 100 18" fill="none" stroke="#737373" stroke-width="1">
<path d="M2.500 2.500h12v12h-12zM6.500 2.500v12M10.500 2.500v12M2.500 6.500h12M2.500 10.500h12" stroke-width="1.200"/>
<path d="M40.500 2.500h13v12h-13z" stroke-width="1.200"/><path d="M43.500 5h7v7.500h-7zM45 7h4M45 9h4M45 11h4"/>
<path d="M78.500 2.500h13v12h-13z" stroke-width="1.200"/><path d="M82.500 2.500v6.500M86.500 2.500v6.500M78.500 9h8"/>
</svg>
<div class="a" style="left:885px;top:703px;width:6px;height:2px;background:#666"></div>
<div class="a" style="left:895px;top:703px;width:100px;height:1px;background:#b9b9ad"></div>
<div class="a" style="left:943px;top:698px;width:5px;height:11px;background:#6a6a6a"></div>
<div class="a" style="left:999px;top:703px;width:7px;height:2px;background:#666"></div><div class="a" style="left:1001.5px;top:700.5px;width:2px;height:7px;background:#666"></div>
<div class="t" style="left:1017.4px;top:696px;letter-spacing:-0.87px;">100 %</div>
<div class="a" style="left:0;top:64px;width:1px;height:652px;background:#007540"></div>
<div class="a" style="left:1065px;top:65px;width:1px;height:651px;background:#4f9a78"></div>
<div class="a" style="left:1066px;top:65px;width:1px;height:651px;background:#007540"></div>
<div class="a" style="left:0;top:714px;width:1067px;height:1px;background:#7ab49a"></div>
<div class="a" style="left:0;top:715px;width:1067px;height:1px;background:#007540"></div>
</body></html>
